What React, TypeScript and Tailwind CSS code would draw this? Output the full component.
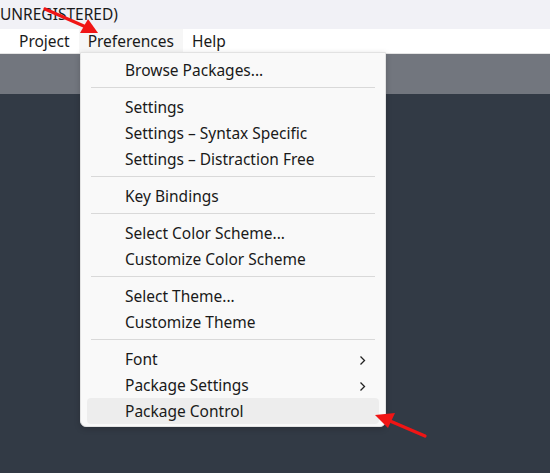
import type { ReactNode } from "react";

// Sublime Text "Preferences" menu, opened from the menu bar.

const FONT = { fontFamily: '"Noto Sans", "Open Sans", sans-serif' };

type Entry = { label: string; sub?: boolean; hover?: boolean } | "sep";

const ENTRIES: Entry[] = [
  { label: "Browse Packages..." },
  "sep",
  { label: "Settings" },
  { label: "Settings – Syntax Specific" },
  { label: "Settings – Distraction Free" },
  "sep",
  { label: "Key Bindings" },
  "sep",
  { label: "Select Color Scheme..." },
  { label: "Customize Color Scheme" },
  "sep",
  { label: "Select Theme..." },
  { label: "Customize Theme" },
  "sep",
  { label: "Font", sub: true },
  { label: "Package Settings", sub: true },
  { label: "Package Control", hover: true },
];

function Chevron() {
  return (
    <svg width="7" height="11" viewBox="0 0 7 11" className="text-[#222]">
      <path d="M1.5 1.5 L5.5 5.5 L1.5 9.5" fill="none" stroke="currentColor" strokeWidth="1.3" />
    </svg>
  );
}

function MenuRow({ label, sub, hover }: { label: string; sub?: boolean; hover?: boolean }) {
  return (
    <div
      className={`mx-[6px] flex h-[26px] items-center justify-between rounded-[4px] pl-[38px] pr-[13px] pt-[2px] ${
        hover ? "bg-[#ededed]" : ""
      }`}
    >
      <span>{label}</span>
      {sub && <Chevron />}
    </div>
  );
}

function MenuBarItem({ children, active = false }: { children: ReactNode; active?: boolean }) {
  return (
    <div className={`flex h-full items-center px-[9px] pt-[2px] ${active ? "bg-[#f6f6f6]" : ""}`}>{children}</div>
  );
}

function Arrows() {
  return (
    <svg width="550" height="473" className="pointer-events-none absolute left-0 top-0">
      {/* top arrow, pointing at Preferences */}
      <line x1="45" y1="9" x2="86" y2="27" stroke="#f01515" strokeWidth="3.2" strokeLinecap="round" />
      <polygon points="98,33 80,33 88,19" fill="#f01515" />
      {/* bottom arrow, pointing at Package Control */}
      <line x1="425" y1="436" x2="390" y2="421" stroke="#f01515" strokeWidth="3.2" strokeLinecap="round" />
      <polygon points="375,415 395,413 388,428" fill="#f01515" />
    </svg>
  );
}

export default function App() {
  return (
    <div className="relative h-[473px] w-[550px] overflow-hidden text-[15.5px] text-[#1a1a1a]" style={FONT}>
      {/* title bar */}
      <div className="flex h-[29px] items-center whitespace-nowrap bg-[#f1f1f6]">
        <span>UNREGISTERED)</span>
      </div>

      {/* menu bar */}
      <div className="flex h-[24px] items-center whitespace-nowrap bg-white pl-[10px]">
        <MenuBarItem>Project</MenuBarItem>
        <MenuBarItem active>Preferences</MenuBarItem>
        <MenuBarItem>Help</MenuBarItem>
      </div>

      {/* editor area */}
      <div className="h-[41px] border-t border-[#e4e4e4] bg-[#72767e]" />
      <div className="h-[379px] bg-[#323a45]" />

      {/* dropdown */}
      <div className="absolute left-[80px] top-[52px] w-[306px] rounded-b-[6px] border border-[#e2e2e2] bg-[#f9f9f9] pb-[2px] pt-[4px] shadow-[0_2px_6px_rgba(0,0,0,0.18)]">
        {ENTRIES.map((e, i) =>
          e === "sep" ? (
            <div key={i} className="mx-[10px] mb-[6px] mt-[4px] h-px bg-[#d9d9d9]" />
          ) : (
            <MenuRow key={i} {...e} />
          )
        )}
      </div>

      <Arrows />
    </div>
  );
}
